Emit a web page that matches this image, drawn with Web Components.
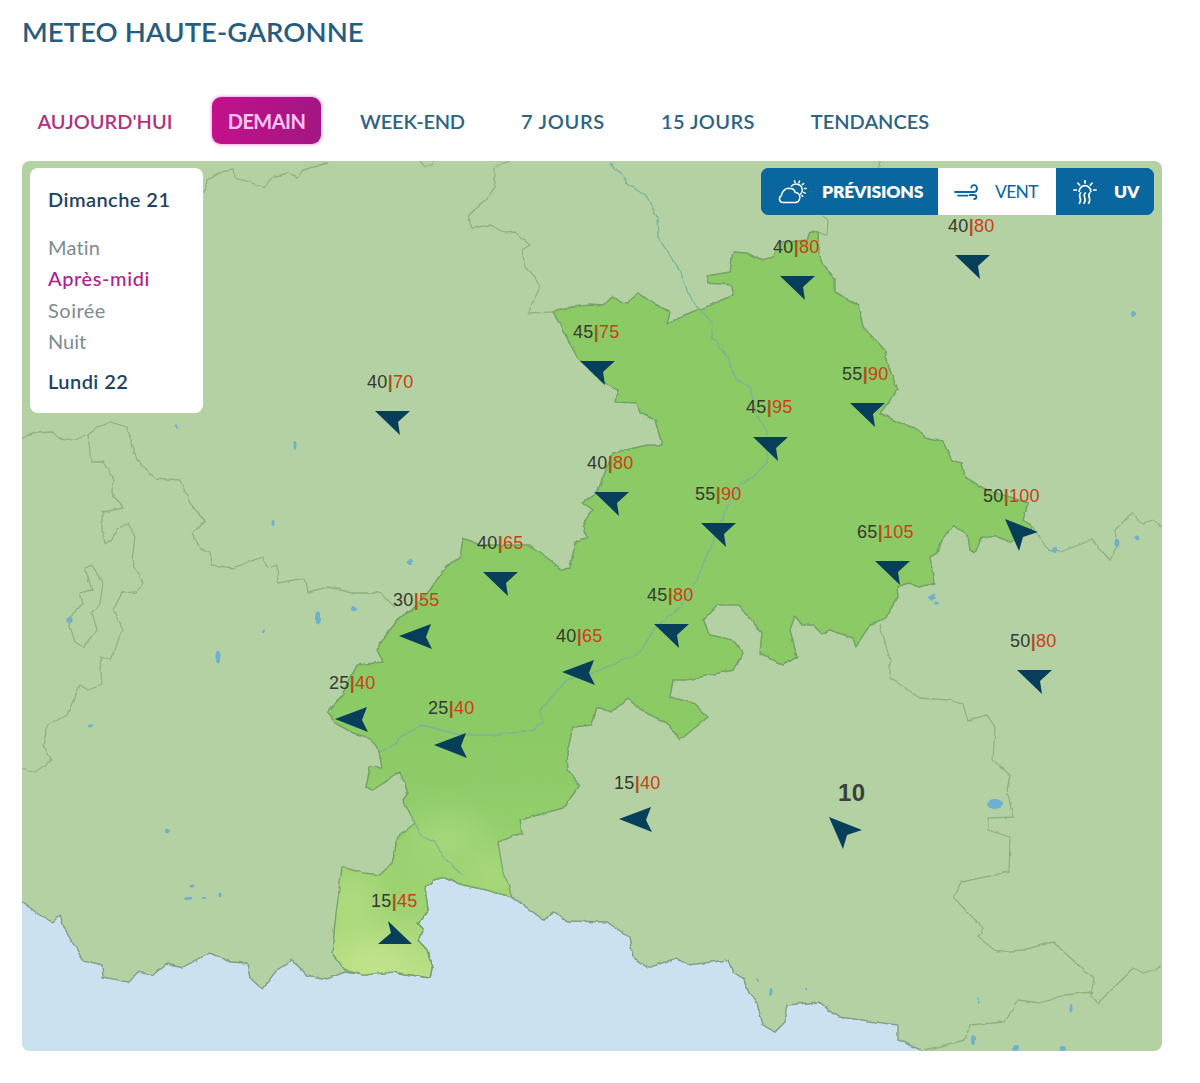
<!DOCTYPE html>
<html lang="fr">
<head>
<meta charset="utf-8">
<title>Météo Haute-Garonne</title>
<style>
  html,body{margin:0;padding:0;background:#fff}
  body{font-family:"Lato","Noto Sans",sans-serif}
</style>
</head>
<body>
<meteo-page>
  <meteo-title slot="title">METEO HAUTE-GARONNE</meteo-title>
  <meteo-tabs slot="tabs">
    <meteo-tab w="170" tone="pink">AUJOURD'HUI</meteo-tab>
    <meteo-tab w="109" ls="-.55" active>DEMAIN</meteo-tab>
    <meteo-tab w="139" ls="-.2">WEEK-END</meteo-tab>
    <meteo-tab w="118" ls=".7">7 JOURS</meteo-tab>
    <meteo-tab w="128" ls=".4">15 JOURS</meteo-tab>
    <meteo-tab w="152">TENDANCES</meteo-tab>
  </meteo-tabs>
  <meteo-map slot="map">
    <day-panel slot="panel">
      <day-item kind="day">Dimanche 21</day-item>
      <day-item kind="part" first ls=".2">Matin</day-item>
      <day-item kind="part" active ls=".6">Après-midi</day-item>
      <day-item kind="part" ls=".5">Soirée</day-item>
      <day-item kind="part">Nuit</day-item>
      <day-item kind="day" last>Lundi 22</day-item>
    </day-panel>
    <layer-switch slot="switch">
      <layer-btn icon="cloud" w="177" pad="17" gap="14" ls="-.2">PRÉVISIONS</layer-btn>
      <layer-btn icon="wind" w="118" pad="16" gap="15" ls="-.7" active>VENT</layer-btn>
      <layer-btn icon="uv" w="98" pad="17" gap="17">UV</layer-btn>
    </layer-switch>
    <wind-pin x="948" y="226" low="40" high="80" shape="down" ax="955" ay="255"></wind-pin>
    <wind-pin x="773" y="247" low="40" high="80" shape="down" ax="780" ay="276"></wind-pin>
    <wind-pin x="573" y="332" low="45" high="75" shape="down" ax="580" ay="361"></wind-pin>
    <wind-pin x="367" y="382" low="40" high="70" shape="down" ax="375" ay="411"></wind-pin>
    <wind-pin x="842" y="374" low="55" high="90" shape="down" ax="850" ay="403"></wind-pin>
    <wind-pin x="746" y="407" low="45" high="95" shape="down" ax="753" ay="437"></wind-pin>
    <wind-pin x="587" y="463" low="40" high="80" shape="down" ax="594" ay="492"></wind-pin>
    <wind-pin x="695" y="494" low="55" high="90" shape="down" ax="701" ay="523"></wind-pin>
    <wind-pin x="983" y="496" low="50" high="100" shape="se" ax="1005" ay="519"></wind-pin>
    <wind-pin x="857" y="532" low="65" high="105" shape="down" ax="875" ay="561"></wind-pin>
    <wind-pin x="477" y="543" low="40" high="65" shape="down" ax="483" ay="572"></wind-pin>
    <wind-pin x="393" y="600" low="30" high="55" shape="left" ax="399" ay="624"></wind-pin>
    <wind-pin x="647" y="595" low="45" high="80" shape="down" ax="654" ay="624"></wind-pin>
    <wind-pin x="556" y="636" low="40" high="65" shape="left" ax="562" ay="660"></wind-pin>
    <wind-pin x="1010" y="641" low="50" high="80" shape="down" ax="1017" ay="670"></wind-pin>
    <wind-pin x="329" y="683" low="25" high="40" shape="left" ax="335" ay="707"></wind-pin>
    <wind-pin x="428" y="708" low="25" high="40" shape="left" ax="434" ay="733"></wind-pin>
    <wind-pin x="614" y="783" low="15" high="40" shape="left" ax="619" ay="807"></wind-pin>
    <wind-pin x="371" y="901" low="15" high="45" shape="up" ax="378" ay="921"></wind-pin>
    <wind-pin x="838" y="793" low="10" shape="se" ax="829" ay="817"></wind-pin>
  </meteo-map>
</meteo-page>

<script>
function shadow(el, html){
  const root = el.attachShadow({mode:'open'});
  root.innerHTML = html;
  return root;
}

customElements.define('meteo-page', class extends HTMLElement{
  constructor(){super();shadow(this,`<style>
    :host{display:flex;flex-direction:column;width:1200px;height:1083px;box-sizing:border-box;padding:0 38px 32px 22px}
    .t{display:block;height:97px}
    .n{display:block;height:64px;margin-left:-2px}
  </style><div class="t"><slot name="title"></slot></div><div class="n"><slot name="tabs"></slot></div><slot name="map"></slot>`);}
});

customElements.define('meteo-title', class extends HTMLElement{
  constructor(){super();shadow(this,`<style>
    :host{display:block;padding-top:14px;font:600 27.5px/36px "Lato",sans-serif;color:#265d7f;letter-spacing:.05px;white-space:nowrap}
  </style><slot></slot>`);}
});

customElements.define('meteo-tabs', class extends HTMLElement{
  constructor(){super();shadow(this,`<style>
    :host{display:flex;gap:22px;align-items:flex-start}
  </style><slot></slot>`);}
});

customElements.define('meteo-tab', class extends HTMLElement{
  constructor(){super();shadow(this,`<style>
    :host{display:flex;align-items:center;justify-content:center;height:47px;box-sizing:border-box;border-radius:9px;
      font:600 20px/1 "Lato",sans-serif;color:#2d6385;white-space:nowrap;flex:none}
    :host([tone=pink]){color:#b3317f}
    :host([active]){background:linear-gradient(90deg,#c3108a,#a21684);color:#f9c4ef;font-weight:700;box-shadow:0 0 3px 1px #f5a6e4}
  </style><slot></slot>`);
    this.style.width=this.getAttribute('w')+'px';
    if(this.hasAttribute('ls'))this.style.letterSpacing=this.getAttribute('ls')+'px';
  }
});

customElements.define('meteo-map', class extends HTMLElement{
  constructor(){super();
    const dept="M553 312L573 307L590 305L603 306L613 296L622 303L627 304L638 293L653 303L670 312L667 323L697 311L733 295L732 285L708 283L706 276L730 272L733 252L747 253L760 260L773 257L780 243L807 240L810 232L818 233L819 253L823 265L835 278L835 292L858 305L863 327L885 350L887 363L898 390L880 413L900 423L915 428L925 438L943 442L952 460L962 463L965 477L983 488L1028 503L1023 520L1032 528L1012 543L998 537L982 537L975 553L970 550L968 537L953 525L940 542L937 553L930 557L934 583L920 587L908 583L897 587L898 597L890 610L887 618L870 625L860 640L856 647L853 638L830 630L823 635L813 625L802 625L795 616L790 630L797 657L783 665L760 653L762 633L738 605L717 605L703 620L710 635L733 640L743 653L733 670L687 680L673 680L670 697L693 703L708 717L680 740L667 723L640 710L628 698L612 712L597 707L592 725L573 727L567 753L568 770L580 785L563 808L520 820L522 833L498 842L502 867L512 897L487 890L463 885L445 877L433 880L425 888L428 910L418 923L423 930L418 940L427 950L432 968L430 978L393 972L363 975L345 970L332 953L335 923L342 867L363 873L380 875L392 863L398 837L415 823L403 800L408 793L400 772L395 775L373 790L366 788L370 767L382 768L378 747L367 737L353 733L335 723L328 712L343 693L357 665L383 662L377 650L380 643L400 617L412 610L430 590L447 565L460 558L463 538L480 545L530 545L550 560L562 570L570 568L575 543L587 537L583 523L593 510L583 503L597 493L603 477L613 453L647 445L662 445L655 420L640 413L637 403L615 402L618 390L603 383L577 357L567 338Z";
    const sea="M22 902L37 913L53 922L60 915L65 930L83 960L102 965L103 977L128 982L138 972L153 975L167 963L183 967L210 953L230 962L247 963L250 978L262 989L277 970L292 960L307 975L327 979L345 972L363 975L393 972L430 978L432 968L427 950L418 940L423 930L418 923L428 910L425 888L433 880L445 877L463 885L487 890L512 897L544 920L553 912L567 921L607 922L629 937L633 957L648 968L676 958L688 965L728 960L733 973L744 980L749 993L756 1000L763 1025L775 1032L784 1023L787 1005L818 1002L839 1017L898 1025L898 1040L921 1050L925 1062L10 1062L10 902Z";
    const borders=[
      "M22 437L37 433L52 432L60 438L73 440L88 435L98 427L110 422L127 427L137 460L155 478L180 480L190 503L205 522L192 533L200 548L210 552L212 565L233 568L262 557L268 568L277 565L278 583L305 578L308 592L328 587L353 593L380 593L395 607",
      "M88 435L91 462L103 462L113 477L112 493L123 508L102 512L102 530L105 543L112 542L117 530L128 523L135 537L132 560L143 583L137 592L122 593L113 610L123 630L110 660L100 657L102 685L88 690L80 685L67 715L48 725L43 745L52 760L35 772L22 768",
      "M85 568L92 565L103 583L100 603L92 612L97 630L83 647L75 642L68 620L83 603L80 593L92 590L85 568",
      "M205 193L207 180L220 172L233 170L235 177L265 188L272 177L288 173L298 177L303 170L328 163",
      "M510 161L495 167L495 187L483 203L468 215L472 228L490 225L505 233L515 232L530 245L522 250L525 267L535 278L540 287L528 313L553 312",
      "M420 161L425 167L432 165L433 161",
      "M880 161L878 170",
      "M810 232L827 235L828 220L823 215",
      "M880 625L890 660L890 678L920 698L950 700L963 705L968 720L987 715L995 727L993 760L1010 775L1007 790L1013 817L988 818L988 830L1010 837L1009 872L961 882L954 898L983 928L978 937L997 952L1023 950L1053 942L1087 973L1094 978L1091 995L1098 1003L1134 968L1143 973L1162 967",
      "M1091 992L1065 995L1040 1003L1018 1000L1005 1022L970 1025L965 1040L925 1050",
      "M1032 526L1048 550L1060 552L1092 540L1110 560L1117 547L1115 530L1132 513L1142 523L1152 520L1162 527"
    ];
    const rivers=[
      "M610 163L620 173L627 183L647 197L657 217L658 237L668 253L680 270L687 290L695 305L713 323L712 337L725 353L737 380L750 387L757 417L767 430L767 463L753 477L740 485L727 507L710 547L697 580L680 607L653 630L640 653L593 673L567 680L540 710L542 723L533 730L497 735L460 735L422 725L400 737L398 743L380 752",
      "M415 823L422 837L435 842L443 857L462 875"
    ];
    const lakes=[[177,427,1,2],[295,445,1.5,4],[273,523,1.5,3],[318,618,3,6.5],[354,609,2.5,2],[264,631,2,1.5],[218,657,2.5,6.5],[90,726,2,1.5],[70,620,2.5,3],[167,831,2,2.5],[192,887,2.5,1.5],[188,898,4,2],[203,898,2.5,1],[220,894,1.5,2.5],[932,597,4,2.5],[936,603,2,1.5],[995,804,8,5],[410,562,3,3],[353,609,2,2],[320,618,1,3],[1133,314,2,3],[1117,543,2.5,4],[1137,538,2.5,2.5],[771,992,1.5,4],[973,1040,2,5],[978,1000,1,3],[1071,1008,1.5,4],[1016,1048,3,3],[1063,1049,3,3],[1020,531,4,2],[1055,550,2,3],[758,980,1,2],[806,989,1,2]];
    shadow(this,`<style>
      :host{display:block;position:relative;width:1140px;height:890px;border-radius:8px;overflow:hidden;background:#b4d1a3;flex:none}
      svg.m{position:absolute;inset:0;display:block}
      ::slotted([slot=panel]){position:absolute;left:8px;top:7px}
      ::slotted([slot=switch]){position:absolute;left:739px;top:7px}
    </style>
    <svg class="m" width="1140" height="890" viewBox="22 161 1140 890" aria-hidden="true">
      <defs>
        <filter id="w" x="-5%" y="-5%" width="110%" height="110%"><feTurbulence type="fractalNoise" baseFrequency=".11" numOctaves="2" seed="4"/><feDisplacementMap in="SourceGraphic" scale="3.4" xChannelSelector="R" yChannelSelector="G"/><feGaussianBlur stdDeviation=".35"/></filter>
        <filter id="b" x="-60%" y="-60%" width="220%" height="220%"><feGaussianBlur stdDeviation="15"/></filter>
        <linearGradient id="g" gradientUnits="userSpaceOnUse" x1="0" y1="730" x2="0" y2="985">
          <stop offset="0" stop-color="#8bca65"/><stop offset=".35" stop-color="#93ce6c"/><stop offset=".7" stop-color="#a3d575"/><stop offset="1" stop-color="#bee189"/>
        </linearGradient>
        <clipPath id="c"><path d="${dept}"/></clipPath>
      </defs>
      <path d="M432 978L440 1000L468 1023L470 1050" fill="none" stroke="#bcd2dc" stroke-width="1"/>
      <g filter="url(#w)">
        <path d="${sea}" fill="#cbe1f0" stroke="#7f9f84" stroke-width="1.4"/>
        <g fill="none" stroke="#8fb283" stroke-width="1.3" stroke-linejoin="round">${borders.map(d=>`<path d="${d}"/>`).join('')}</g>
        <path d="${dept}" fill="url(#g)" stroke="#74a268" stroke-width="1.5" stroke-linejoin="round"/>
        <g clip-path="url(#c)"><g filter="url(#b)">
          <ellipse cx="447" cy="838" rx="36" ry="20" fill="#a6d87b"/>
          <ellipse cx="495" cy="875" rx="18" ry="16" fill="#afdc82"/>
          <ellipse cx="375" cy="958" rx="32" ry="10" fill="#cbe793"/>
          <ellipse cx="352" cy="900" rx="14" ry="22" fill="#bbe188"/>
          <ellipse cx="405" cy="895" rx="13" ry="28" fill="#98d06f"/>
        </g></g>
        <g fill="none" stroke="#78b59a" stroke-width="1.3" stroke-linejoin="round">${rivers.map(d=>`<path d="${d}"/>`).join('')}</g>
        <g fill="#6fb0cf">${lakes.map(l=>`<ellipse cx="${l[0]}" cy="${l[1]}" rx="${l[2]}" ry="${l[3]}"/>`).join('')}</g>
      </g>
    </svg>
    <slot name="panel"></slot><slot name="switch"></slot><slot></slot>`);
  }
});

customElements.define('day-panel', class extends HTMLElement{
  constructor(){super();shadow(this,`<style>
    :host{display:flex;flex-direction:column;width:173px;height:245px;box-sizing:border-box;padding:16px 18px 0;background:#fff;border-radius:8px}
  </style><slot></slot>`);}
});

customElements.define('day-item', class extends HTMLElement{
  constructor(){super();shadow(this,`<style>
    :host{display:block;height:31.5px;font:400 20px/31.5px "Lato",sans-serif;color:#7c8b94;white-space:nowrap}
    :host([kind=day]){font-weight:600;color:#1f4360;letter-spacing:.45px}
    :host([active]){color:#b0208f;font-weight:500}
    :host([first]){margin-top:16px}
    :host([last]){margin-top:8px}
  </style><slot></slot>`);
    if(this.hasAttribute('ls'))this.style.letterSpacing=this.getAttribute('ls')+'px';
  }
});

const ICONS={
  cloud:`<svg width="30" height="24" viewBox="0 0 30 24" fill="none" stroke="currentColor" stroke-width="1.5" stroke-linecap="round" stroke-linejoin="round"><path d="M5 22.5C1.3 22.5 .2 17.6 3.3 15.6 4.2 11 8 7.4 11.8 8.4 14.6 8.2 16.8 10 17.2 12.6 21 12.2 23 16.4 21.4 19.6 20.7 21.6 19.3 22.5 17.5 22.5Z"/><path d="M13.5 6.2C15.3 3.4 20 3.3 22.6 5.8 25 8.2 24.8 11.8 22.6 14"/><path d="M16.5 .8 17 2.4M21.5 1 20.9 2.7M25.6 3.6 24.2 4.8M28.2 8.4H26.4M27.2 13.2 25.6 12.4M24.6 16.4 24 15.4"/></svg>`,
  wind:`<svg width="26" height="16" viewBox="0 0 26 16" fill="none" stroke="currentColor" stroke-width="1.8" stroke-linecap="round"><path d="M1 8H19.5C24 8 24.2 1.2 20 1.2 18.3 1.2 17.3 2.3 17.4 3.6"/><path d="M4 11.6H13.6"/><path d="M15.8 11H20C21.6 11 22.4 12 22.4 13 22.4 14.2 21.4 15 20.2 15"/></svg>`,
  uv:`<svg width="24" height="24" viewBox="0 0 24 24" fill="none" stroke="currentColor" stroke-width="1.7" stroke-linecap="round"><path d="M6.2 11.5A5.8 5.8 0 0 1 17.8 11.5"/><path d="M12 .6V3M5 3.2 6.6 5M19 3.2 17.4 5M.8 10H3.4M20.6 10H23.2"/><path d="M7.6 13C4.4 16 9.8 19 6.4 23.2M12.2 13C9 16 14.4 19 11 23.2M16.8 13C13.6 16 19 19 15.6 23.2"/></svg>`
};

customElements.define('layer-switch', class extends HTMLElement{
  constructor(){super();shadow(this,`<style>
    :host{display:flex;height:47px;border-radius:8px;overflow:hidden;background:#0a669f}
  </style><slot></slot>`);}
});

customElements.define('layer-btn', class extends HTMLElement{
  constructor(){super();
    const r=shadow(this,`<style>
      :host{display:flex;align-items:center;height:47px;box-sizing:border-box;font:800 17.5px/1 "Lato",sans-serif;color:#fff;white-space:nowrap;background:#0a669f}
      :host([active]){background:#fff;color:#0a669f;font-weight:400}
      svg{display:block}
      span{display:flex;flex:none}
    </style><span id="i"></span><slot></slot>`);
    r.getElementById('i').innerHTML=ICONS[this.getAttribute('icon')];
    this.style.width=this.getAttribute('w')+'px';
    this.style.paddingLeft=this.getAttribute('pad')+'px';
    this.style.gap=this.getAttribute('gap')+'px';
    if(this.hasAttribute('ls'))this.style.letterSpacing=this.getAttribute('ls')+'px';
  }
});

const ARROWS={
  down:{w:36,h:26,d:"M0 0H35L23 11L25 24Z"},
  left:{w:36,h:28,d:"M0 12L32 0L27 13L33 25Z"},
  se:{w:36,h:34,d:"M0 0L33 13L18 18L14 32Z"},
  up:{w:36,h:26,d:"M10 0L34 23H0L13 12Z"}
};

customElements.define('wind-pin', class extends HTMLElement{
  constructor(){super();
    const g=k=>this.getAttribute(k);
    const a=ARROWS[g('shape')];
    const x=+g('x'),y=+g('y'),ax=+g('ax'),ay=+g('ay');
    const hi=g('high');
    const label=hi?`<b>${g('low')}</b><s>|</s><i>${hi}</i>`:`<b class="big">${g('low')}</b>`;
    shadow(this,`<style>
      :host{position:absolute;display:block;left:0;top:0;width:0;height:0}
      .l{position:absolute;white-space:nowrap;font:400 18px/20px "Liberation Sans",Arial,sans-serif;letter-spacing:.3px;transform:translateY(-10px)}
      b{font-weight:400;color:#36392f}
      s{text-decoration:none;color:#a9521f;font-weight:700}
      i{font-style:normal;color:#cb4018}
      b.big{font-weight:700;font-size:24px;line-height:24px;color:#3c3f3c;display:block;transform:translateY(-2px)}
      svg{position:absolute;display:block}
      path{fill:#073f5b}
    </style>
    <div class="l" style="left:${x-22}px;top:${y-161}px">${label}</div>
    <svg style="left:${ax-22}px;top:${ay-161}px" width="${a.w}" height="${a.h}" viewBox="0 0 ${a.w} ${a.h}"><path d="${a.d}"/></svg>`);
  }
});
</script>
</body>
</html>
